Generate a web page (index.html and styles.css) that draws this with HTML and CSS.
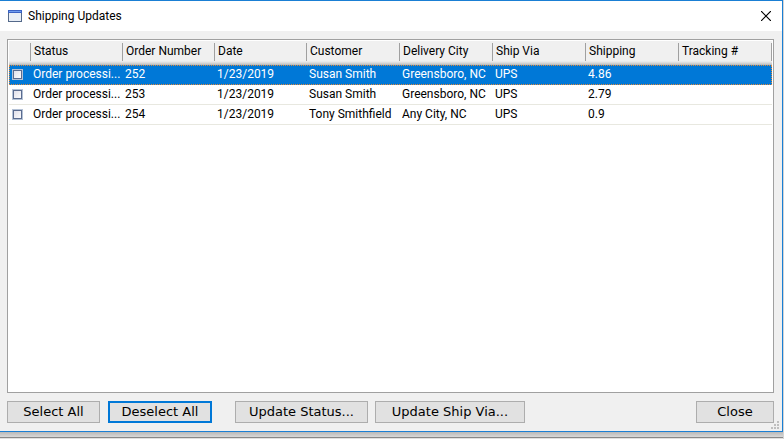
FILE: index.html
```
<!DOCTYPE html>
<html lang="en">
<head>
    <meta charset="UTF-8">
    <meta name="viewport" content="width=device-width, initial-scale=1.0">
    <title>Shipping Updates</title>
    <link rel="stylesheet" href="styles.css">
</head>
<body>
    <main class="window">
        <header class="titlebar">
            <svg class="app-icon" width="14" height="12" viewBox="0 0 14 12" shape-rendering="crispEdges">
                <rect width="14" height="12" fill="#54698a"/>
                <rect width="14" height="3" fill="#3a62c4"/>
                <rect x="1" y="1" width="12" height="1" fill="#6f9cf0"/>
                <rect x="1" y="3" width="12" height="8" fill="#e8eef6"/>
            </svg>
            <h1>Shipping Updates</h1>
            <button type="button" class="close-icon" aria-label="Close window">
                <svg width="10" height="10" viewBox="0 0 10 10">
                    <path d="M0 0L10 10M10 0L0 10" stroke="#000" stroke-width="1.2"/>
                </svg>
            </button>
        </header>

        <div class="list">
            <table>
                <colgroup>
                    <col class="col-check">
                    <col class="col-narrow">
                    <col class="col-narrow">
                    <col class="col-narrow">
                    <col>
                    <col>
                    <col>
                    <col>
                    <col>
                </colgroup>
                <thead>
                    <tr>
                        <th></th>
                        <th>Status</th>
                        <th>Order Number</th>
                        <th>Date</th>
                        <th>Customer</th>
                        <th>Delivery City</th>
                        <th>Ship Via</th>
                        <th>Shipping</th>
                        <th>Tracking #</th>
                    </tr>
                </thead>
                <tbody>
                    <tr class="selected">
                        <td><input type="checkbox" aria-label="Order 252"></td>
                        <td>Order processi...</td>
                        <td>252</td>
                        <td>1/23/2019</td>
                        <td>Susan Smith</td>
                        <td>Greensboro, NC</td>
                        <td>UPS</td>
                        <td>4.86</td>
                        <td></td>
                    </tr>
                    <tr>
                        <td><input type="checkbox" aria-label="Order 253"></td>
                        <td>Order processi...</td>
                        <td>253</td>
                        <td>1/23/2019</td>
                        <td>Susan Smith</td>
                        <td>Greensboro, NC</td>
                        <td>UPS</td>
                        <td>2.79</td>
                        <td></td>
                    </tr>
                    <tr>
                        <td><input type="checkbox" aria-label="Order 254"></td>
                        <td>Order processi...</td>
                        <td>254</td>
                        <td>1/23/2019</td>
                        <td>Tony Smithfield</td>
                        <td>Any City, NC</td>
                        <td>UPS</td>
                        <td>0.9</td>
                        <td></td>
                    </tr>
                </tbody>
            </table>
        </div>

        <footer class="actions">
            <button type="button" class="btn btn-select">Select All</button>
            <button type="button" class="btn btn-deselect">Deselect All</button>
            <button type="button" class="btn btn-status">Update Status...</button>
            <button type="button" class="btn btn-via">Update Ship Via...</button>
            <button type="button" class="btn btn-close">Close</button>
        </footer>

        <svg class="grip" width="8" height="8" viewBox="0 0 8 8" fill="#bfbfbf" shape-rendering="crispEdges">
            <path d="M6 0h2v2h-2zM3 3h2v2h-2zM6 3h2v2h-2zM0 6h2v2h-2zM3 6h2v2h-2zM6 6h2v2h-2z"/>
        </svg>
    </main>
    <div class="behind"></div>
</body>
</html>
```
FILE: styles.css
```
* {
    box-sizing: border-box;
}

body {
    display: flex;
    flex-direction: column;
    height: 100vh;
    margin: 0;
    padding-right: 1px;
    background-color: #d4d4d4;
    color: #000;
    font-family: "Segoe UI", Roboto, sans-serif;
    font-size: 12px;
    overflow: hidden;
}

.window {
    position: relative;
    display: flex;
    flex-direction: column;
    flex: 1;
    background-color: #f0f0f0;
    border: 1px solid #1a7fd4;
    border-left: none;
}

.titlebar {
    display: flex;
    align-items: center;
    height: 30px;
    padding: 0 11px 0 8px;
    background-color: #fff;
}

.titlebar h1 {
    flex: 1;
    margin: 0 0 0 6px;
    font-size: 12px;
    font-weight: normal;
}

.close-icon {
    display: flex;
    padding: 0;
    border: none;
    background: none;
}

.list {
    flex: 1;
    margin: 8px 8px 0 7px;
    padding: 1px;
    background-color: #fff;
    border: 1px solid #a0a0a0;
}

table {
    width: 100%;
    table-layout: fixed;
    border-collapse: separate;
    border-spacing: 0;
}

.col-check {
    width: 22px;
}

.col-narrow {
    width: 92px;
}

th {
    position: relative;
    height: 24px;
    padding: 0 3px 4px;
    background: linear-gradient(#f0f0f0 20px, #d8d8d8 22px, #b8b8b8);
    font-weight: normal;
    line-height: 16px;
    text-align: left;
    white-space: nowrap;
}

/* column divider */
th::after {
    content: "";
    position: absolute;
    top: 2px;
    right: 0;
    width: 1px;
    height: 18px;
    background-color: #a0a0a0;
}

td {
    height: 20px;
    padding: 0 0 1px 2px;
    border-bottom: 1px solid #e8e8e0;
    line-height: 16px;
    white-space: nowrap;
}

.selected td {
    background-color: #0078d7;
    border-bottom-color: #0078d7;
    color: #fff;
}

.selected {
    outline: 1px dotted #e08a3c;
    outline-offset: -1px;
}

input[type="checkbox"] {
    appearance: none;
    display: block;
    width: 11px;
    height: 11px;
    margin: 1px 0 0 1px;
    border: 1px solid #b4c2d6;
    outline: 1px solid #5a6c90;
    outline-offset: -2px;
    background: linear-gradient(135deg, #dcdce8, #fff);
}

.actions {
    display: flex;
    padding: 8px 8px 8px 7px;
}

.btn {
    height: 22px;
    padding: 0;
    background-color: #e1e1e1;
    border: 1px solid #adadad;
    color: #000;
    font-family: Verdana, "DejaVu Sans", sans-serif;
    font-size: 13px;
    line-height: 16px;
}

.btn-select {
    width: 93px;
}

.btn-deselect {
    width: 104px;
    margin-left: 8px;
    border: 2px solid #0078d7;
}

.btn-status {
    width: 133px;
    margin-left: 23px;
}

.btn-via {
    width: 150px;
    margin-left: 7px;
}

.btn-close {
    width: 78px;
    margin-left: auto;
}

.grip {
    position: absolute;
    right: 3px;
    bottom: 2px;
}

/* strip of the parent window showing below the dialog */
.behind {
    height: 7px;
    background: linear-gradient(#b8b8b8, #d8d8d8 5px, #888 5px, #888 6px, #e0e0e0 6px);
}
```
